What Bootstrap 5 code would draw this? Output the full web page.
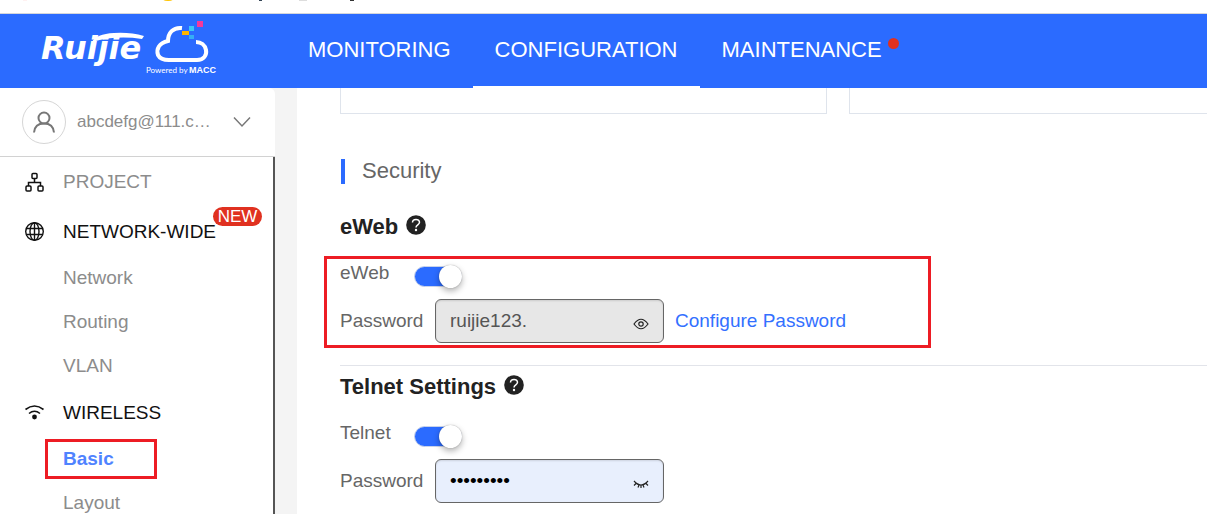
<!DOCTYPE html>
<html lang="en">
<head>
<meta charset="utf-8">
<meta name="viewport" content="width=device-width, initial-scale=1">
<title>Ruijie Cloud - Configuration</title>
<link href="https://cdn.jsdelivr.net/npm/bootstrap@5.3.0/dist/css/bootstrap.min.css" rel="stylesheet">
<style>
  body { font-family: "Liberation Sans", Arial, sans-serif; font-size: 19px; line-height: 28px; color: #666; background: #f4f4f4; }
  .top-strip { height: 14px; background: #fff; border-bottom: 1px solid #d4d6dc; }
  .app-header { height: 74px; background: #2b6bff; padding-left: 30px; }
  .brand-link { width: 256px; }
  .brand-link svg { display: block; }
  .main-tabs .nav-link { height: 74px; padding: 0 22px; font-size: 22px; line-height: 72px; color: #fff; border-bottom: 2px solid transparent; }
  .main-tabs .nav-link.active { border-color: #fff; }
  .alert-dot { top: 24px; right: 5px; width: 11px; height: 11px; background: #e03120; }

  .side-panel { width: 275px; background: #fff; border-radius: 0 6px 0 0; }
  .account-btn { height: 69px; padding: 0 24px 1px 22px; border: 0; border-bottom: 1px solid #d2d2d2; background: transparent; font-size: 17px; color: #8c8c8c; }
  .avatar-ring { width: 44px; height: 44px; border: 1px solid #d6d6d6; }
  .account-name { margin-left: 11px; }
  .side-menu { border-right: 2px solid #555; }
  .menu-group, .menu-item { color: #8c8c8c; text-decoration: none; }
  .menu-group { height: 50px; padding-left: 24px; gap: 18px; }
  .menu-group svg { width: 21px; height: 21px; }
  .menu-group.is-open { height: 49px; color: #111; }
  .menu-item { height: 44px; padding-left: 63px; }
  .menu-item.is-current { width: 112px; height: 40px; margin: 2px 0 2px 45px; padding-left: 15px; border: 3px solid #ed1c24; color: #4f83ff; font-weight: 700; }
  .new-badge { top: 0; left: 213px; width: 49px; height: 19px; background: #e03120; color: #fff; font-size: 17px; line-height: 19px; }

  .content-panel { margin-left: 22px; padding-left: 43px; background: #fff; }
  .panel-row { display: grid; grid-template-columns: 487fr 358fr; gap: 22px; height: 26px; }
  .panel-end { border: 1px solid #dfe4ec; border-top: 0; }
  .panel-end:last-child { border-right: 0; }
  .section-title { margin: 45px 0 27px 1px; padding-left: 17px; border-left: 4px solid #2b6bff; font-size: 22px; line-height: 24px; padding-bottom: 1px; font-weight: 400; }
  .group-title { margin: 0 0 14px 0; padding-top: 1px; gap: 8px; font-size: 22px; line-height: 30px; font-weight: 700; color: #222; }
  .setting-box { max-width: 607px; margin-left: -16px; padding: 0 0 2px 13px; border: 3px solid transparent; }
  .setting-box.is-marked { border-color: #ed1c24; }
  .switch-row { height: 40px; }
  .switch-row label { width: 74px; }
  .field-row label { width: 95px; }
  .toggle-box.form-check-input { position: relative; width: 48px; height: 21px; margin: 7px 0 0; border: 1px solid #c9d3ea; border-radius: 11px; background: #2b6bff none; }
  .toggle-box.form-check-input::before { content: ""; position: absolute; top: -2px; right: -1px; width: 23px; height: 23px; border-radius: 50%; background: #fff; box-shadow: 0 3px 6px rgba(0,0,0,.3), 0 0 1px rgba(0,0,0,.4); }
  .secret-field { width: 229px; }
  .secret-field .form-control { height: 44px; padding: 0 44px 0 14px; border: 1px solid #666; border-radius: 6px; font-size: 19px; line-height: 28px; color: #555; background: #e7e7e7; box-shadow: inset 0 1px 2px rgba(0,0,0,.12); }
  .secret-field .form-control.is-autofilled { background: #e8effd; color: #000; }
  .eye-btn { top: 14px; right: 14px; width: 18px; height: 20px; padding: 0; border: 0; background: transparent; line-height: 1; }
  .text-action { margin-left: 11px; color: #3370ff; text-decoration: none; }
  .group-line { margin: 17px 0 5px; border-top: 1px solid #e2e4ea; opacity: 1; }
</style>
</head>
<body class="vh-100 d-flex flex-column overflow-hidden">

<div class="top-strip flex-shrink-0">
  <svg class="d-block" width="400" height="4" aria-hidden="true">
    <ellipse cx="168" cy="-1" rx="5" ry="2" fill="#ffc400"/>
    <path d="M23 0h4" stroke="#ffe3e3"/>
    <path d="M259 0h3v1h-3z" fill="#345"/>
    <path d="M299 0h8" stroke="#ddd" stroke-width="2"/>
    <path d="M350 0h4v1h-4z" fill="#333"/>
  </svg>
</div>

<header class="app-header d-flex flex-shrink-0">
  <a class="brand-link" href="#" aria-label="Ruijie Cloud">
    <svg width="200" height="70" viewBox="0 0 200 70">
      <text x="11" y="45" fill="#fff" font-family="DejaVu Sans" font-style="italic" font-weight="700" font-size="32">Ruijie</text>
      <path d="M62 28Q66 20 84 19Q100 18 114 22L112 25Q86 21 62 28z" fill="#fff"/>
      <path d="M152 14C143 13 138 19 138 27C129 29 126 35 128 41C130 45 134 46 139 46H167C174 46 177 41 176 36C175 31 171 28 166 28" fill="none" stroke="#fff" stroke-width="4"/>
      <path d="M159 12h5v5h-5z" fill="#3bc8f5"/>
      <path d="M159 21h5v4h-5z" fill="#35aef5"/>
      <path d="M152 17h7v4h-7z" fill="#ffb400"/>
      <path d="M167 7h6v6h-6z" fill="#f5399b"/>
      <text x="116" y="59" fill="#fff" font-family="Lato" font-size="8">Powered by</text>
      <text x="159" y="59" fill="#fff" font-family="Liberation Sans" font-weight="700" font-size="9">MACC</text>
    </svg>
  </a>
  <nav class="nav main-tabs flex-nowrap" aria-label="Main">
    <a class="nav-link" href="#">MONITORING</a>
    <a class="nav-link active" href="#" aria-current="page">CONFIGURATION</a>
    <a class="nav-link position-relative" href="#">MAINTENANCE<span class="alert-dot position-absolute rounded-circle"></span></a>
  </nav>
</header>

<div class="d-flex flex-grow-1 overflow-hidden">
  <aside class="side-panel d-flex flex-column flex-shrink-0 overflow-hidden">
    <button type="button" class="account-btn d-flex align-items-center flex-shrink-0">
      <span class="avatar-ring rounded-circle d-flex align-items-center justify-content-center flex-shrink-0">
        <svg width="22" height="22" viewBox="0 0 22 22" fill="none" stroke="#777" stroke-width="2"><circle cx="11" cy="7" r="5.5"/><path d="M1 21.500C1.500 15.500 5.500 12.500 11 12.500S20.500 15.500 21 21.500"/></svg>
      </span>
      <span class="account-name flex-grow-1 text-start">abcdefg@111.c…</span>
      <svg width="18" height="12" viewBox="0 0 18 12" fill="none" stroke="#777" stroke-width="1.500"><path d="M1 1.500L9 10L17 1.500"/></svg>
    </button>
    <nav class="side-menu flex-grow-1 overflow-hidden" aria-label="Configuration">
      <a class="menu-group d-flex align-items-center" href="#">
        <svg viewBox="0 0 21 21" fill="none" stroke="#111" stroke-width="1.500"><rect x="8" y="1.500" width="5" height="5" rx="1"/><rect x="2" y="14" width="5" height="5" rx="1"/><rect x="14" y="14" width="5" height="5" rx="1"/><path d="M10.500 6.500v4M4.500 14V10.500h12V14"/></svg>
        <span>PROJECT</span>
      </a>
      <a class="menu-group is-open d-flex align-items-center position-relative" href="#">
        <svg viewBox="0 0 21 21" fill="none" stroke="#111" stroke-width="1.400"><circle cx="10.500" cy="10.500" r="8.800"/><ellipse cx="10.500" cy="10.500" rx="4.500" ry="8.800"/><path d="M10.500 2v17M2.500 7.500h16M2.500 13.500h16"/></svg>
        <span>NETWORK-WIDE</span>
        <span class="new-badge position-absolute rounded-pill text-center">NEW</span>
      </a>
      <a class="menu-item d-flex align-items-center" href="#">Network</a>
      <a class="menu-item d-flex align-items-center" href="#">Routing</a>
      <a class="menu-item d-flex align-items-center" href="#">VLAN</a>
      <a class="menu-group is-open d-flex align-items-center" href="#">
        <svg viewBox="0 0 21 21" fill="none" stroke="#111" stroke-width="1.600"><path d="M1.500 7.500Q10.500 0.500 19.500 7.500M5 11.500Q10.500 7 16 11.500"/><circle cx="10.500" cy="15" r="2.400" fill="#111" stroke="none"/></svg>
        <span>WIRELESS</span>
      </a>
      <a class="menu-item is-current d-flex align-items-center" href="#" aria-current="page">Basic</a>
      <a class="menu-item d-flex align-items-center" href="#">Layout</a>
    </nav>
  </aside>

  <main class="content-panel flex-grow-1 overflow-hidden">
    <div class="panel-row">
      <div class="panel-end"></div>
      <div class="panel-end"></div>
    </div>

    <h2 class="section-title">Security</h2>

    <h3 class="group-title d-flex align-items-center">eWeb
      <svg class="mb-1" width="20" height="20" viewBox="0 0 20 20"><circle cx="10" cy="10" r="9.800" fill="#222"/><path d="M6.500 7.500C6.500 3.500 13.500 3.500 13.500 7.300C13.500 9.800 10 9.800 10 12.500" fill="none" stroke="#fff" stroke-width="1.500"/><circle cx="10" cy="15" r="1.200" fill="#fff"/></svg>
    </h3>
    <div class="setting-box is-marked">
      <div class="switch-row d-flex align-items-start">
        <label for="eweb-on">eWeb</label>
        <input class="form-check-input toggle-box" type="checkbox" role="switch" id="eweb-on" checked>
      </div>
      <div class="field-row d-flex align-items-center">
        <label for="eweb-pass">Password</label>
        <div class="secret-field position-relative">
          <input class="form-control" type="text" id="eweb-pass" value="ruijie123." readonly>
          <button type="button" class="eye-btn position-absolute" aria-label="Hide password">
            <svg width="16" height="12" viewBox="0 0 16 12" fill="none" stroke="#222" stroke-width="1.200"><path d="M1 6Q8-3.500 15 6Q8 15.500 1 6z"/><circle cx="8" cy="6" r="2.200"/></svg>
          </button>
        </div>
        <a class="text-action" href="#">Configure Password</a>
      </div>
    </div>

    <hr class="group-line">

    <h3 class="group-title d-flex align-items-center">Telnet Settings
      <svg class="mb-1" width="20" height="20" viewBox="0 0 20 20"><circle cx="10" cy="10" r="9.800" fill="#222"/><path d="M6.500 7.500C6.500 3.500 13.500 3.500 13.500 7.300C13.500 9.800 10 9.800 10 12.500" fill="none" stroke="#fff" stroke-width="1.500"/><circle cx="10" cy="15" r="1.200" fill="#fff"/></svg>
    </h3>
    <div class="setting-box">
      <div class="switch-row d-flex align-items-start">
        <label for="telnet-on">Telnet</label>
        <input class="form-check-input toggle-box" type="checkbox" role="switch" id="telnet-on" checked>
      </div>
      <div class="field-row d-flex align-items-center">
        <label for="telnet-pass">Password</label>
        <div class="secret-field position-relative">
          <input class="form-control is-autofilled" type="password" id="telnet-pass" value="ruijie123">
          <button type="button" class="eye-btn position-absolute" aria-label="Show password">
            <svg width="16" height="12" viewBox="0 0 16 12" fill="none" stroke="#222" stroke-width="1.200"><path d="M1 3Q8 11 15 3M3 5.500L1 7.500M6 7L5 9.500M8 7.500V10M10 7L11 9.500M13 5.500L15 7.500"/></svg>
          </button>
        </div>
      </div>
    </div>
  </main>
</div>

<script src="https://cdn.jsdelivr.net/npm/bootstrap@5.3.0/dist/js/bootstrap.bundle.min.js"></script>
</body>
</html>
